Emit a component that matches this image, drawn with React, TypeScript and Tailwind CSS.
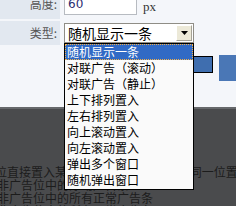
const options = [
  "随机显示一条",
  "对联广告（滚动）",
  "对联广告（静止）",
  "上下排列置入",
  "左右排列置入",
  "向上滚动置入",
  "向左滚动置入",
  "弹出多个窗口",
  "随机弹出窗口",
];

export default function App() {
  return (
    <div className="relative flex h-[206px] w-[236px] flex-col overflow-hidden bg-[#f4f6fa] font-['Noto_Sans_CJK_SC',sans-serif] text-[12px] text-[#222]">
      {/* 高度 row (cut at the top) */}
      <div className="-mt-[11px] flex h-[30px] shrink-0">
        <div className="flex w-[60px] items-center justify-end bg-[#e2e8f0] pr-[3px] text-[#555]">高度:</div>
        <div className="ml-[4px] flex items-start pt-[4px]">
          <div className="flex h-[22px] w-[73px] items-center border border-[#b7bbc1] bg-white pl-[3px] font-['DejaVu_Sans',sans-serif] text-[12px] text-[#2a2a70]">
            60
          </div>
          <span className="ml-[6px] mt-[7px] font-['Liberation_Serif',serif] text-[13px] leading-[13px] text-[#333]">px</span>
        </div>
      </div>

      {/* 类型 row */}
      <div className="mt-[2px] flex h-[24px] shrink-0">
        <div className="flex w-[60px] items-center justify-end bg-[#e2e8f0] pr-[3px] text-[#555]">类型:</div>
        <div className="ml-[4px] mt-[2px] flex h-[20px] w-[130px] items-center border border-[#8f8d86] bg-white">
          <span className="flex-1 pl-[3px] text-[14px] leading-[18px] text-black">随机显示一条</span>
          <div className="mr-[1px] flex h-[16px] w-[16px] items-center justify-center border border-t-white border-l-white border-r-[#a6a397] border-b-[#a6a397] bg-[#ece9d8]">
            <svg width="7" height="4" viewBox="0 0 7 4">
              <path d="M0 0h7L3.5 4z" fill="#000" />
            </svg>
          </div>
        </div>
      </div>

      {/* buttons row */}
      <div className="mt-[10px] flex shrink-0 gap-[6px] pl-[140px]">
        <button className="mt-[1px] flex h-[17px] w-[82px] items-center justify-end border border-black bg-[#3f6eaf] pr-[15px] text-[12px] leading-[12px] text-white">
          选择广告位
        </button>
        <div className="h-[26px] w-[20px] bg-[#4a77b6]" />
      </div>

      {/* dimmed area */}
      <div className="mt-[26px] flex-1 border-t-2 border-[#66686b] bg-[#4a4b4d] pt-[56px] text-[12px] leading-[13px] text-[#1c1c1c]">
        <div className="-ml-[5px] whitespace-nowrap">位直接置入某个页面中， 与原广告在同一位置</div>
        <div className="-ml-[3px] whitespace-nowrap">非广告位中的浮动广告条</div>
        <div className="-ml-[3px] whitespace-nowrap">非广告位中的所有正常广告条</div>
        <div className="-ml-[3px] whitespace-nowrap">非广告位中的所有正常广告条</div>
      </div>

      {/* open select list */}
      <div className="absolute left-[64px] top-[43px] h-[147px] w-[130px] border border-black bg-[#fafafa]">
        {options.map((o, i) =>
          i === 0 ? (
            <div
              key={o}
              className="h-[16px] border border-dotted border-[#f2b04a] bg-[#316ac5] pl-[1px] leading-[14px] text-white"
            >
              {o}
            </div>
          ) : (
            <div key={o} className="h-[16px] pl-[2px] leading-[16px] text-black">
              {o}
            </div>
          ),
        )}
      </div>
    </div>
  );
}
